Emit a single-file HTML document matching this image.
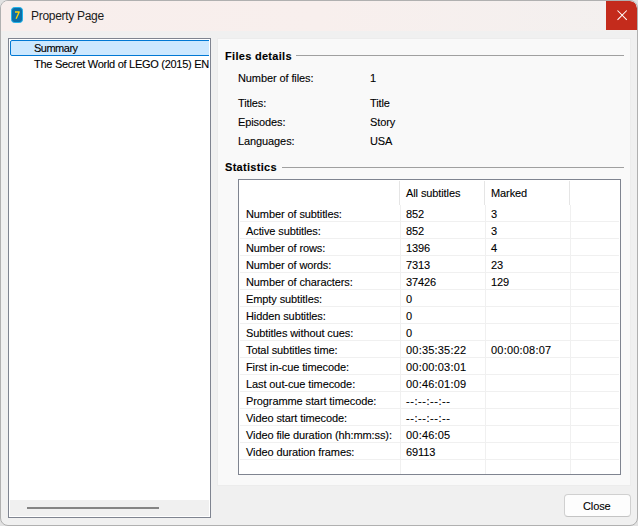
<!DOCTYPE html>
<html><head><meta charset="utf-8">
<style>
html,body{margin:0;padding:0;width:638px;height:526px;overflow:hidden;background:#e2e2e2;}
*{box-sizing:border-box;}
body{font-family:"Liberation Sans",sans-serif;font-size:11px;color:#000;letter-spacing:-0.1px;-webkit-text-stroke:0.1px #000;}
.a{position:absolute;}
.t{position:absolute;white-space:nowrap;line-height:13px;height:13px;}
#win{position:absolute;left:0;top:0;width:638px;height:526px;border:1px solid #b0b0b0;border-radius:8px;background:#f0f0f0;overflow:hidden;}
#title{position:absolute;left:0;top:0;width:636px;height:30px;background:linear-gradient(90deg,#f8eeec 0%,#f8efed 50%,#f3f0ef 100%);}
#close{position:absolute;left:605px;top:0;width:31px;height:29px;background:#c42b1c;border-top-right-radius:7px;}
#tree{position:absolute;left:8px;top:38px;width:203px;height:480px;border:1px solid #7f8490;background:#fff;overflow:hidden;}
#clip{position:absolute;left:0;top:0;width:200px;height:460px;overflow:hidden;}
#sel{position:absolute;left:1px;top:1px;width:230px;height:16px;border:1px solid #0078d4;border-radius:2px;background:#cce8ff;}
#hs{position:absolute;left:1px;top:461px;width:199px;height:16px;background:#f0f0f0;}
#thumb{position:absolute;left:17px;top:7px;width:132px;height:2px;background:#858585;}
#panel{position:absolute;left:217px;top:38px;width:414px;height:448px;background:#f9f9f9;border:1px solid #ececec;border-top-color:#ececec;}
.gl{position:absolute;height:1px;background:#a0a0a0;}
.b{font-weight:bold;letter-spacing:0.3px;}
.n{letter-spacing:0.2px;}
.d{letter-spacing:0.55px;}
#tbl{position:absolute;left:238px;top:179px;width:383px;height:296px;border:1px solid #7f8490;background:#fff;overflow:hidden;}
.hsep{position:absolute;top:1px;width:1px;height:24px;background:#e5e5e5;}
.vl{position:absolute;top:25px;width:1px;height:270px;background:#f0f0f0;}
.hl{position:absolute;left:1px;width:379px;height:1px;background:#f0f0f0;}
#btn{position:absolute;left:564px;top:494px;width:67px;height:23px;border:1px solid #d0d0d0;border-bottom-color:#c4c4c4;border-radius:4px;background:#fdfdfd;}
</style></head>
<body>
<div id="win">
  <div id="title">
    <svg class="a" style="left:10px;top:6px" width="12" height="16" viewBox="0 0 12 16">
      <rect x="0.5" y="0.5" width="11" height="15" rx="3" fill="#0b6fa8" stroke="#1fb2ea" stroke-width="1"/>
      <path d="M4 5 H8.2 L5.1 11.8" stroke="#ffd10a" stroke-width="1.35" fill="none" stroke-linejoin="round"/>
    </svg>
    <div class="t" style="left:30px;top:8px;font-size:12px;letter-spacing:-0.3px;line-height:14px;height:14px;color:#1a1a1a;-webkit-text-stroke:0">Property Page</div>
  </div>
  <div id="close">
    <svg class="a" style="left:11px;top:9px" width="11" height="11" viewBox="0 0 11 11">
      <path d="M0.5 0.5 L9.8 9.8 M9.8 0.5 L0.5 9.8" stroke="#fff" stroke-width="1.05" fill="none"/>
    </svg>
  </div>
</div>

<div id="tree">
  <div id="clip">
  <div id="sel"></div>
  <div class="t" style="left:25px;top:3px;letter-spacing:-0.5px">Summary</div>
  <div class="t" style="left:25px;top:19px;letter-spacing:-0.28px">The Secret World of LEGO (2015) EN</div>
  </div>
  <div id="hs"><div id="thumb"></div></div>
</div>

<div id="panel"></div>
<div class="t b" style="left:225px;top:50px">Files details</div>
<div class="gl" style="left:296px;top:55px;width:328px"></div>
<div class="t" style="left:238px;top:72px">Number of files:</div>
<div class="t" style="left:370px;top:72px">1</div>
<div class="t" style="left:238px;top:97px">Titles:</div>
<div class="t" style="left:370px;top:97px">Title</div>
<div class="t" style="left:238px;top:116px">Episodes:</div>
<div class="t" style="left:370px;top:116px">Story</div>
<div class="t" style="left:238px;top:135px">Languages:</div>
<div class="t" style="left:370px;top:135px">USA</div>

<div class="t b" style="left:225px;top:161px">Statistics</div>
<div class="gl" style="left:282px;top:167px;width:342px"></div>

<div id="tbl">
  <div class="hsep" style="left:160px"></div>
  <div class="hsep" style="left:245px"></div>
  <div class="hsep" style="left:330px"></div>
  <div class="vl" style="left:161px"></div>
  <div class="vl" style="left:246px"></div>
  <div class="vl" style="left:331px"></div>
  <div class="t" style="left:167px;top:7px">All subtitles</div>
  <div class="t" style="left:252px;top:7px">Marked</div>
  <div class="t" style="left:7px;top:28px">Number of subtitles:</div>
  <div class="t" style="left:167px;top:28px">852</div>
  <div class="t" style="left:252px;top:28px">3</div>
  <div class="hl" style="top:41px"></div>
  <div class="t" style="left:7px;top:45px">Active subtitles:</div>
  <div class="t" style="left:167px;top:45px">852</div>
  <div class="t" style="left:252px;top:45px">3</div>
  <div class="hl" style="top:58px"></div>
  <div class="t" style="left:7px;top:62px">Number of rows:</div>
  <div class="t" style="left:167px;top:62px">1396</div>
  <div class="t" style="left:252px;top:62px">4</div>
  <div class="hl" style="top:75px"></div>
  <div class="t" style="left:7px;top:79px">Number of words:</div>
  <div class="t" style="left:167px;top:79px">7313</div>
  <div class="t" style="left:252px;top:79px">23</div>
  <div class="hl" style="top:92px"></div>
  <div class="t" style="left:7px;top:96px">Number of characters:</div>
  <div class="t" style="left:167px;top:96px">37426</div>
  <div class="t" style="left:252px;top:96px">129</div>
  <div class="hl" style="top:109px"></div>
  <div class="t" style="left:7px;top:113px">Empty subtitles:</div>
  <div class="t" style="left:167px;top:113px">0</div>
  <div class="hl" style="top:126px"></div>
  <div class="t" style="left:7px;top:130px">Hidden subtitles:</div>
  <div class="t" style="left:167px;top:130px">0</div>
  <div class="hl" style="top:143px"></div>
  <div class="t" style="left:7px;top:147px">Subtitles without cues:</div>
  <div class="t" style="left:167px;top:147px">0</div>
  <div class="hl" style="top:160px"></div>
  <div class="t" style="left:7px;top:164px">Total subtitles time:</div>
  <div class="t n" style="left:167px;top:164px">00:35:35:22</div>
  <div class="t n" style="left:252px;top:164px">00:00:08:07</div>
  <div class="hl" style="top:177px"></div>
  <div class="t" style="left:7px;top:181px">First in-cue timecode:</div>
  <div class="t n" style="left:167px;top:181px">00:00:03:01</div>
  <div class="hl" style="top:194px"></div>
  <div class="t" style="left:7px;top:198px">Last out-cue timecode:</div>
  <div class="t n" style="left:167px;top:198px">00:46:01:09</div>
  <div class="hl" style="top:211px"></div>
  <div class="t" style="left:7px;top:215px">Programme start timecode:</div>
  <div class="t d" style="left:167px;top:215px">--:--:--:--</div>
  <div class="hl" style="top:228px"></div>
  <div class="t" style="left:7px;top:232px">Video start timecode:</div>
  <div class="t d" style="left:167px;top:232px">--:--:--:--</div>
  <div class="hl" style="top:245px"></div>
  <div class="t" style="left:7px;top:249px">Video file duration (hh:mm:ss):</div>
  <div class="t n" style="left:167px;top:249px">00:46:05</div>
  <div class="hl" style="top:262px"></div>
  <div class="t" style="left:7px;top:266px">Video duration frames:</div>
  <div class="t" style="left:167px;top:266px">69113</div>
  <div class="hl" style="top:279px"></div>
</div>

<div id="btn"><div class="t" style="left:18px;top:5px">Close</div></div>
</body></html>
